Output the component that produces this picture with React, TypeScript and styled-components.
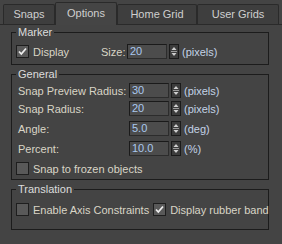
import React from 'react';
import styled, { createGlobalStyle } from 'styled-components';

const GlobalStyle = createGlobalStyle`
  html, body {
    margin: 0;
    padding: 0;
    background: #444444;
  }
  body {
    font-family: "Liberation Sans", Arial, sans-serif;
    font-size: 11px;
    color: #d9d5c6;
  }
`;

const Panel = styled.div`
  width: 282px;
  height: 244px;
  background: #444444;
  overflow: hidden;
`;

const TabBar = styled.div`
  display: flex;
  align-items: flex-end;
  height: 25px;
  padding: 0 3px;
  box-sizing: border-box;
  border-bottom: 1px solid #2a2a2a;
`;

const Tab = styled.div<{ $active?: boolean; $w: number }>`
  width: ${p => p.$w}px;
  height: ${p => (p.$active ? 23 : 20)}px;
  box-sizing: border-box;
  display: flex;
  align-items: center;
  justify-content: center;
  padding-bottom: ${p => (p.$active ? 3 : 1)}px;
  border: 1px solid #2a2a2a;
  border-bottom: none;
  border-radius: 2px 2px 0 0;
  background: ${p => (p.$active ? '#454545' : '#3e3e3e')};
  color: #cfcfcf;
  margin-bottom: ${p => (p.$active ? -1 : 0)}px;
  position: relative;
`;

const Group = styled.fieldset<{ $top?: number; $bottom: number }>`
  margin: ${p => p.$top ?? 0}px 13px 0 11px;
  padding: 0 4px ${p => p.$bottom}px 4px;
  border: 1px solid #1c1c1c;
  min-width: 0;
`;

const Legend = styled.legend`
  padding: 0 2px;
  line-height: 14px;
  color: #dcdcdc;
`;

const FieldRow = styled.div<{ $top: number }>`
  display: grid;
  grid-template-columns: 111px 40px 10px auto;
  column-gap: 2px;
  align-items: center;
  height: 15px;
  margin-top: ${p => p.$top}px;
`;

const Label = styled.span`
  padding-left: 2px;
  white-space: nowrap;
`;

const Unit = styled.span`
  margin-left: 1px;
  color: #c3d2e6;
  white-space: nowrap;
`;

const NumberBox = styled.div`
  height: 15px;
  box-sizing: border-box;
  border: 1px solid #1a1a1a;
  border-bottom-color: #2c2c2c;
  border-right-color: #2c2c2c;
  background: #4c4c4c;
  color: #a9c8ef;
  padding-left: 2px;
  line-height: 13px;
`;

const SpinBox = styled.div`
  height: 15px;
  width: 10px;
  box-sizing: border-box;
  border: 1px solid #1a1a1a;
  background: #3c3c3c;
  display: flex;
`;

const CheckRow = styled.div<{ $top: number }>`
  display: flex;
  align-items: center;
  height: 15px;
  margin-top: ${p => p.$top}px;
`;

const MarkerRow = styled.div`
  display: grid;
  grid-template-columns: 83px 28px 40px 10px auto;
  align-items: center;
  height: 15px;
  margin-top: 5px;
  & > :nth-child(4) {
    margin-left: 2px;
  }
  & > :nth-child(5) {
    margin-left: 5px;
  }
`;

const Check = styled.label<{ $gapLeft?: number }>`
  display: flex;
  align-items: center;
  gap: 4px;
  white-space: nowrap;
  margin-left: ${p => p.$gapLeft ?? 0}px;
`;

const Box = styled.span`
  width: 13px;
  height: 13px;
  box-sizing: border-box;
  border: 1px solid #1e1e1e;
  background: #595959;
  display: flex;
  flex: none;
`;

const Spinner = () => (
  <SpinBox>
    <svg width="8" height="13" viewBox="0 0 8 13">
      <path d="M4 2 L6.5 5 L1.5 5 Z" fill="#cfcfcf" />
      <line x1="1" y1="6.5" x2="7" y2="6.5" stroke="#9a9a9a" strokeWidth="1" />
      <path d="M1.5 8 L6.5 8 L4 11 Z" fill="#cfcfcf" />
    </svg>
  </SpinBox>
);

const CheckBox = ({ checked }: { checked?: boolean }) => (
  <Box>
    {checked && (
      <svg width="11" height="11" viewBox="0 0 11 11">
        <path d="M2 5.5 L4.3 8 L9 2.5" fill="none" stroke="#eeeeee" strokeWidth="1.8" />
      </svg>
    )}
  </Box>
);

const NumberField = ({ label, value, unit, top }: { label: string; value: string; unit: string; top: number }) => (
  <FieldRow $top={top}>
    <Label>{label}</Label>
    <NumberBox>{value}</NumberBox>
    <Spinner />
    <Unit>{unit}</Unit>
  </FieldRow>
);

export default function App() {
  return (
    <Panel>
      <GlobalStyle />
      <TabBar>
        <Tab $w={52}>Snaps</Tab>
        <Tab $w={62} $active>Options</Tab>
        <Tab $w={80}>Home Grid</Tab>
        <Tab $w={82}>User Grids</Tab>
      </TabBar>

      <Group $bottom={5}>
        <Legend>Marker</Legend>
        <MarkerRow>
          <Check>
            <CheckBox checked />
            Display
          </Check>
          <Label>Size:</Label>
          <NumberBox>20</NumberBox>
          <Spinner />
          <Unit>(pixels)</Unit>
        </MarkerRow>
      </Group>

      <Group $top={2} $bottom={3}>
        <Legend>General</Legend>
        <NumberField label="Snap Preview Radius:" value="30" unit="(pixels)" top={2} />
        <NumberField label="Snap Radius:" value="20" unit="(pixels)" top={3} />
        <NumberField label="Angle:" value="5.0" unit="(deg)" top={5} />
        <NumberField label="Percent:" value="10.0" unit="(%)" top={5} />
        <CheckRow $top={5}>
          <Check>
            <CheckBox />
            Snap to frozen objects
          </Check>
        </CheckRow>
      </Group>

      <Group $top={2} $bottom={12}>
        <Legend>Translation</Legend>
        <CheckRow $top={6}>
          <Check>
            <CheckBox />
            Enable Axis Constraints
          </Check>
          <Check $gapLeft={4}>
            <CheckBox checked />
            Display rubber band
          </Check>
        </CheckRow>
      </Group>
    </Panel>
  );
}
